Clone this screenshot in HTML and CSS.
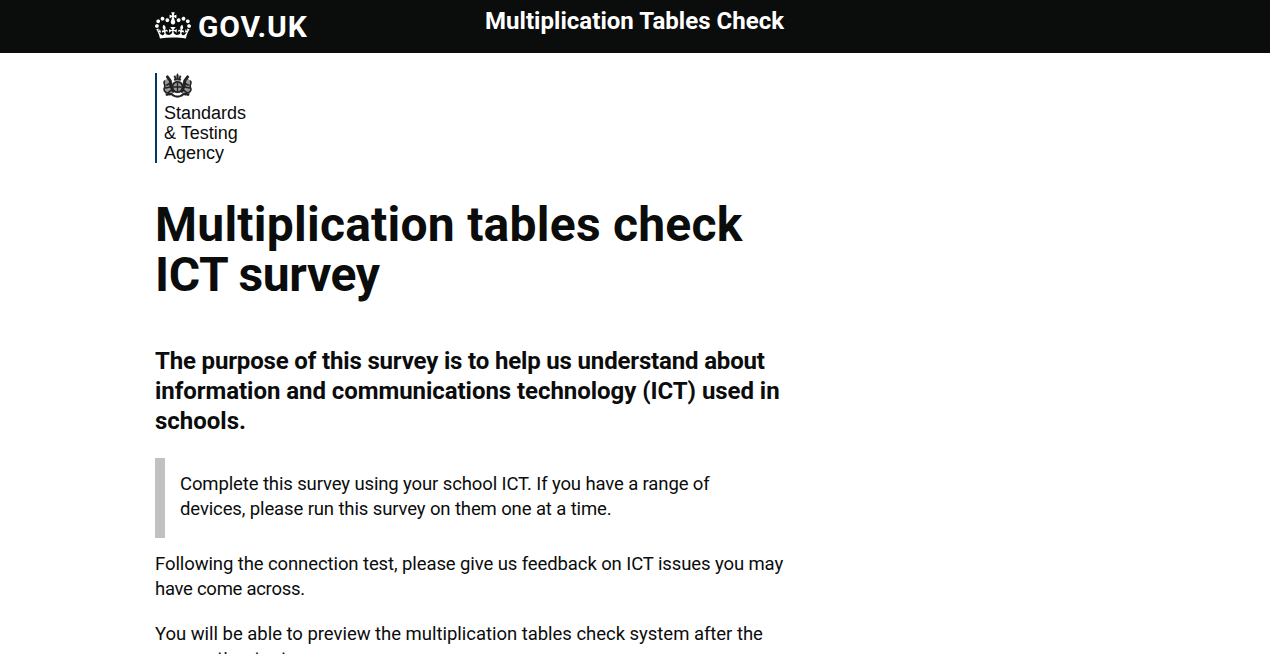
FILE: index.html
```html
<!DOCTYPE html>
<html lang="en">
<head>
<meta charset="utf-8">
<title>Multiplication tables check ICT survey</title>
<link rel="stylesheet" href="styles.css">
</head>
<body>
<header class="header">
  <div class="container header-inner">
    <a class="logo">
      <svg class="crown" viewBox="0 0 132 97" aria-hidden="true"><path fill="currentColor" fill-rule="evenodd" d="M25 30.2c3.5 1.5 7.7-.2 9.1-3.7 1.5-3.6-.2-7.8-3.9-9.2-3.6-1.4-7.6.3-9.1 3.9-1.4 3.5.3 7.5 3.9 9zM9 39.5c3.6 1.5 7.8-.2 9.2-3.7 1.5-3.6-.2-7.8-3.9-9.1-3.6-1.5-7.6.2-9.1 3.8-1.4 3.5.3 7.5 3.8 9zM4.4 57.2c3.5 1.5 7.7-.2 9.1-3.8 1.5-3.6-.2-7.7-3.9-9.1-3.5-1.5-7.6.3-9.1 3.8-1.4 3.5.3 7.6 3.9 9.1zm38.3-21.4c3.5 1.5 7.7-.2 9.1-3.8 1.5-3.6-.2-7.7-3.9-9.1-3.6-1.5-7.6.3-9.1 3.8-1.3 3.6.4 7.7 3.9 9.1zm64.4-5.6c-3.6 1.5-7.8-.2-9.1-3.7-1.5-3.6.2-7.8 3.8-9.2 3.6-1.4 7.7.3 9.2 3.9 1.3 3.5-.4 7.5-3.9 9zm15.9 9.3c-3.6 1.5-7.7-.2-9.1-3.7-1.5-3.6.2-7.8 3.7-9.1 3.6-1.5 7.7.2 9.2 3.8 1.5 3.5-.3 7.5-3.8 9zm4.7 17.7c-3.6 1.5-7.8-.2-9.2-3.8-1.5-3.6.2-7.7 3.9-9.1 3.6-1.5 7.7.3 9.2 3.8 1.3 3.5-.4 7.6-3.9 9.1zM89.3 35.8c-3.6 1.5-7.8-.2-9.2-3.8-1.4-3.6.2-7.7 3.9-9.1 3.6-1.5 7.7.3 9.2 3.8 1.4 3.6-.3 7.7-3.9 9.1zM69.7 17.7l8.9 4.7V9.3l-8.9 2.8c-.2-.3-.5-.6-.9-.9L72.4 0H59.6l3.5 11.2c-.3.3-.6.5-.9.9l-8.8-2.8v13.1l8.8-4.7c.3.3.6.7.9.9l-5 15.4v.1c-.2.8-.4 1.6-.4 2.4 0 4.1 3.1 7.5 7 8.1h.2c.3 0 .7.1 1 .1.4 0 .7 0 1-.1h.2c4-.6 7.1-4.1 7.1-8.1 0-.8-.1-1.7-.4-2.4V34l-5.1-15.4c.4-.2.7-.6 1-.9zM66 92.8c16.9 0 32.8 1.1 47.1 3.2 4-16.9 8.9-26.7 14-33.5l-9.6-3.4c1 4.9 1.1 7.2 0 10.2-1.5-1.4-3-4.3-4.2-8.7L108.6 76c2.8-2 5-3.2 7.5-3.3-4.4 9.4-10 11.9-13.6 11.2-4.3-.8-6.3-4.6-5.6-7.9 1-4.7 5.7-5.9 8-.5 4.3-8.7-3-11.4-7.6-8.8 7.1-7.2 7.9-13.5 2.1-21.1-8 6.1-8.1 12.3-4.5 20.8-4.7-5.4-12.1-2.5-9.5 6.2 3.4-5.2 7.9-2 7.2 3.1-.6 4.3-6.4 7.8-13.5 7.2-10.3-.9-10.9-8-11.2-13.8 2.5-.5 7.1 1.8 11 7.3L80.2 60c-4.1 4.4-8 5.3-12.3 5.4 1.4-4.4 8-11.6 8-11.6H55.5s6.4 7.2 7.9 11.6c-4.2-.1-8-1-12.3-5.4l1.4 16.4c3.9-5.5 8.5-7.7 10.9-7.3-.3 5.8-.9 12.8-11.1 13.8-7.2.6-12.9-2.9-13.5-7.2-.7-5 3.8-8.3 7.1-3.1 2.7-8.7-4.6-11.6-9.4-6.2 3.7-8.5 3.6-14.7-4.6-20.8-5.8 7.6-5 13.9 2.2 21.1-4.7-2.6-11.9.1-7.7 8.8 2.3-5.5 7.1-4.2 8.1.5.7 3.3-1.3 7.1-5.7 7.9-3.5.7-9-1.8-13.5-11.2 2.5.1 4.7 1.3 7.5 3.3l-4.7-15.4c-1.2 4.4-2.7 7.2-4.3 8.7-1.1-3-.9-5.3 0-10.2l-9.5 3.4c5 6.9 9.9 16.7 14 33.5 14.8-2.1 30.8-3.2 47.7-3.2z"/></svg>
      <span class="logo-text">GOV.UK</span>
    </a>
    <div class="service">Multiplication Tables Check</div>
  </div>
</header>
<main class="container">
  <div class="agency">
    <svg class="crest" viewBox="0 0 30 26" aria-hidden="true">
      <circle cx="15" cy="14" r="6.500" fill="#999"/>
      <path fill="#999" d="M1 8l5-4 4 6v12l-7 1-2-6zM29 8l-5-4-4 6v12l7 1 2-6zM11 3l4-2 4 2-1 5h-6z"/>
      <g fill="none" stroke="#222" stroke-linecap="round">
        <path stroke-width="3" d="M4.500 3.500l3 4 .5 5 2.500 6M25.500 3.500l-3 4-.5 5-2.500 6"/>
        <path stroke-width="1.700" d="M8 10l-4 2M7 14l-4 1M9 17l-4 3 2 2M1.500 8C0 10 3 12 1.500 15s1 4 2 5M22 10l4 2M23 14l4 1M21 17l4 3-2 2M28.500 8c1.500 2-1.500 4 0 7s-1 4-2 5"/>
        <path stroke-width="2.200" d="M4 22q4-2 7 1 4 2 8 0 3-3 7-1"/>
        <circle cx="15" cy="14" r="5.300" stroke-width="1.800"/>
        <path stroke-width="1.400" d="M15 10v8M11 14h8"/>
        <path stroke-width="1.600" d="M12 6.500q3-1.500 6 0M15 .8v4M12 3l1 2M18 3l-1 2"/>
      </g>
    </svg>
    <div class="agency-name">Standards<br>&amp; Testing<br>Agency</div>
  </div>
  <h1 class="title"><span class="title-a">Multiplication tables check</span><br><span class="title-b">ICT survey</span></h1>
  <p class="lead"><span class="lead-a">The purpose of this survey is to help us understand about</span><br><span class="lead-b">information and communications technology (ICT) used in</span><br>schools.</p>
  <div class="inset">Complete this survey using your school ICT. If you have a range of<br>devices, please run this survey on them one at a time.</div>
  <p class="body">Following the connection test, please give us feedback on ICT issues you may<br><span class="wide">have come across.</span></p>
  <p class="body preview">You will be able to preview the multiplication tables check system after the<br><span class="loose">connection test.</span></p>
</main>
</body>
</html>
```

FILE: styles.css
```css
html { overflow: hidden; }
body { margin: 0; height: 654px; overflow: hidden; background: #fff; color: #0b0c0c; font: 18.5px/25px Roboto, sans-serif; letter-spacing: -.12px; white-space: nowrap; }
.container { width: 960px; margin: 0 auto; }
.header { background: #0b0c0c; color: #fff; height: 53px; }
.header-inner { display: flex; }
.logo { display: flex; width: 330px; padding-top: 12px; box-sizing: border-box; }
.crown { width: 36px; height: 27px; margin-right: 7px; }
.logo-text { font-weight: 700; font-size: 30px; line-height: 30px; letter-spacing: .8px; }
.service { font-weight: 700; font-size: 24px; line-height: 30px; padding-top: 6px; letter-spacing: .04px; }
.agency { margin-top: 20px; height: 90px; border-left: 2px solid #003764; padding-left: 7px; box-sizing: border-box; }
.crest { display: block; width: 29px; height: 26px; margin-left: -1px; }
.agency-name { font: 18px/20px "Liberation Sans", sans-serif; padding-top: 4px; letter-spacing: 0; }
.title { margin: 37px 0 0; font-size: 48px; line-height: 50px; font-weight: 700; }
.title-a { letter-spacing: .24px; }
.title-b { letter-spacing: -.4px; }
.lead { margin: 46px 0 0; font-size: 24px; line-height: 30px; font-weight: 700; letter-spacing: 0; }
.lead-a { letter-spacing: -.16px; }
.lead-b { letter-spacing: -.05px; }
.inset { margin-top: 22px; border-left: 10px solid #bfc1c3; padding: 14px 15px 16px; }
.body { margin: 14px 0 0; letter-spacing: -.1px; }
.preview { margin-top: 20px; letter-spacing: -.03px; }
.wide { letter-spacing: -.28px; }
.loose { letter-spacing: .3px; }
```
